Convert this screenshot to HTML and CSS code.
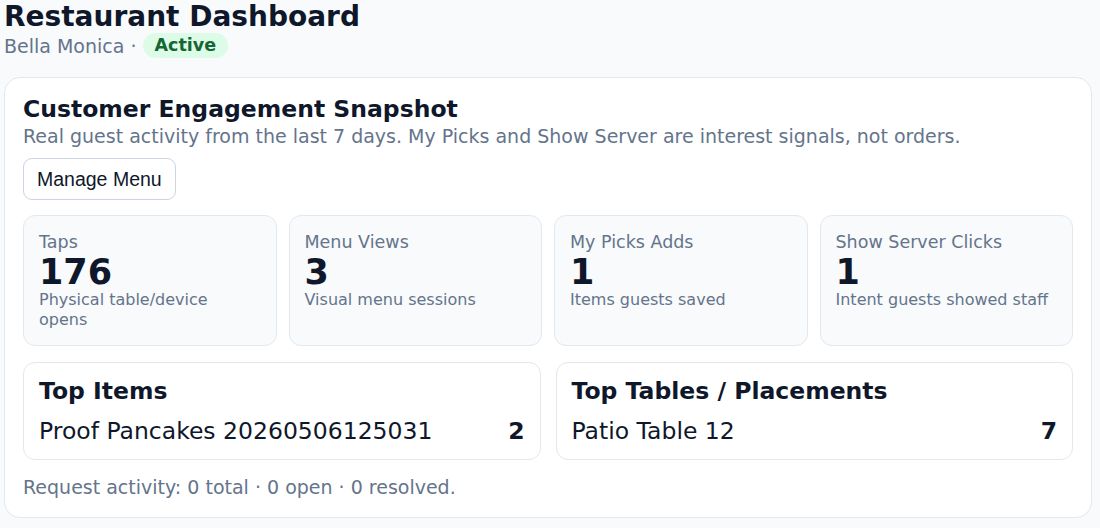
FILE: index.html
```html
<!DOCTYPE html>
<html lang="en">
<head>
    <meta charset="UTF-8">
    <title>Restaurant Dashboard</title>
    <link rel="stylesheet" href="styles.css">
</head>
<body>
    <header class="page-head">
        <h1>Restaurant Dashboard</h1>
        <div class="sub">Bella Monica · <span class="badge">Active</span></div>
    </header>

    <section class="card">
        <h2>Customer Engagement Snapshot</h2>
        <p class="muted">Real guest activity from the last 7 days. My Picks and Show Server are interest signals, not orders.</p>
        <button class="btn">Manage Menu</button>

        <div class="stats">
            <div class="stat">
                <div class="stat-label">Taps</div>
                <div class="stat-value">176</div>
                <div class="stat-desc">Physical table/device opens</div>
            </div>
            <div class="stat">
                <div class="stat-label">Menu Views</div>
                <div class="stat-value">3</div>
                <div class="stat-desc">Visual menu sessions</div>
            </div>
            <div class="stat">
                <div class="stat-label">My Picks Adds</div>
                <div class="stat-value">1</div>
                <div class="stat-desc">Items guests saved</div>
            </div>
            <div class="stat">
                <div class="stat-label">Show Server Clicks</div>
                <div class="stat-value">1</div>
                <div class="stat-desc">Intent guests showed staff</div>
            </div>
        </div>

        <div class="tops">
            <div class="top-box">
                <h3>Top Items</h3>
                <div class="top-row"><span>Proof Pancakes 20260506125031</span><strong>2</strong></div>
            </div>
            <div class="top-box">
                <h3>Top Tables / Placements</h3>
                <div class="top-row"><span>Patio Table 12</span><strong>7</strong></div>
            </div>
        </div>

        <p class="muted foot">Request activity: 0 total · 0 open · 0 resolved.</p>
    </section>
</body>
</html>
```

FILE: styles.css
```css
body {
    font-family: 'DejaVu Sans', sans-serif;
    background-color: #f8fafc;
    color: #0f172a;
    margin: 0;
    padding: 0 8px 0 4px;
}
.page-head h1 {
    font-size: 28px;
    line-height: 33px;
    margin: 0;
}
.sub {
    font-size: 19px;
    color: #64748b;
    line-height: 26px;
    height: 26px;
}
.badge {
    display: inline-block;
    background-color: #dcfce7;
    color: #166534;
    font-weight: bold;
    font-size: 17.5px;
    padding: 0 12px;
    border-radius: 999px;
    line-height: 25px;
    vertical-align: top;
}
.card {
    margin-top: 18px;
    background: #fff;
    border: 1px solid #e2e8f0;
    border-radius: 16px;
    padding: 16px 18px 18px;
}
.card h2 {
    font-size: 23.5px;
    margin: 0;
    line-height: 30px;
}
.muted {
    color: #64748b;
    font-size: 19px;
    margin: 0;
    line-height: 24px;
}
.btn {
    margin-top: 10px;
    font-family: 'Liberation Sans', Arial, sans-serif;
    font-size: 19.5px;
    color: #0f172a;
    background: #fff;
    border: 1px solid #cbd5e1;
    border-radius: 9px;
    padding: 0 13px;
    height: 42px;
    display: block;
}
.stats {
    display: grid;
    grid-template-columns: repeat(4, 1fr);
    gap: 12px;
    margin-top: 15px;
}
.stat {
    background: #f8fafc;
    border: 1px solid #e2e8f0;
    border-radius: 12px;
    padding: 14px 15px 15px;
}
.stat-label {
    color: #64748b;
    font-size: 17.5px;
    line-height: 24px;
}
.stat-value {
    font-size: 35px;
    font-weight: bold;
    line-height: 36px;
}
.stat-desc {
    color: #64748b;
    font-size: 16px;
    line-height: 20px;
}
.tops {
    display: grid;
    grid-template-columns: 1fr 1fr;
    gap: 15px;
    margin-top: 16px;
}
.top-box {
    border: 1px solid #e2e8f0;
    border-radius: 12px;
    padding: 14px 15px 13px;
}
.top-box h3 {
    font-size: 23.5px;
    margin: 0 0 10px;
    line-height: 29px;
}
.top-row {
    display: flex;
    justify-content: space-between;
    font-size: 23.5px;
    line-height: 30px;
}
.foot {
    margin-top: 15px;
}
```
